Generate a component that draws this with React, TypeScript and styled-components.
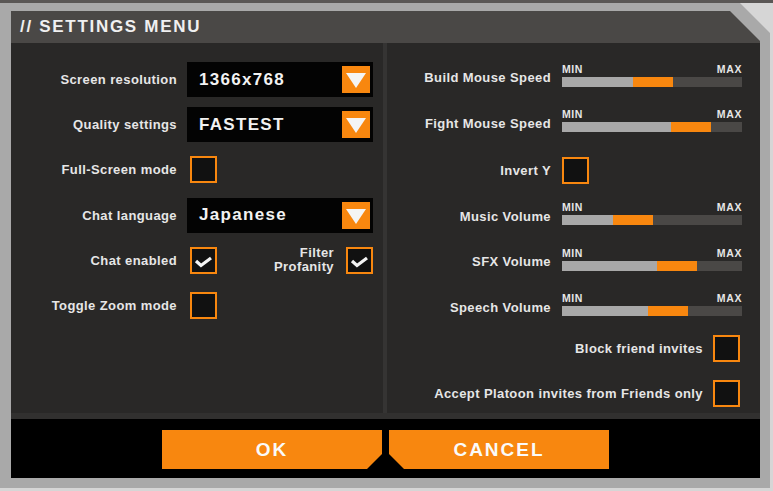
import React from 'react'
import styled, { createGlobalStyle } from 'styled-components'

const GlobalStyle = createGlobalStyle`
  html, body {
    margin: 0;
    padding: 0;
    background: #d4d4d4;
  }
  * {
    box-sizing: border-box;
  }
`;

const ORANGE = '#f8870f';

const Page = styled.div`
  width: 773px;
  height: 491px;
  padding-top: 3px;
  background: linear-gradient(#5a5755 0 3px, #d6d6d6 3px);
  font-family: "Liberation Sans", Arial, sans-serif;
  overflow: hidden;
`;

// 바깥 회색 테두리

const Frame = styled.div`
  width: 770px;
  height: 485px;
  padding: 8px 10px 10px 11px;
  background: #a9a9a9;
  clip-path: polygon(0 0, calc(100% - 30px) 0, 100% 30px, 100% 100%, 0 100%);
`;

const Panel = styled.div`
  width: 100%;
  height: 100%;
  display: flex;
  flex-direction: column;
  clip-path: polygon(0 0, calc(100% - 30px) 0, 100% 30px, 100% 100%, 0 100%);
`;

const TitleBar = styled.div`
  height: 32px;
  flex-shrink: 0;
  display: flex;
  align-items: center;
  padding-left: 9px;
  background: #4a4846;
`;

const Title = styled.h1`
  margin: 0;
  color: #f0f0f0;
  font-size: 17px;
  font-weight: 700;
  letter-spacing: 1.7px;
  line-height: 20px;
`;

// 메인 컨텐츠

const Content = styled.div`
  height: 370px;
  flex-shrink: 0;
  display: grid;
  grid-template-columns: 372px 4px 1fr;
  background: #292827;
`;

const Divider = styled.div`
  background: #353433;
`;

const ContentEdge = styled.div`
  height: 6px;
  flex-shrink: 0;
  background: #31302f;
`;

const Column = styled.div<{ $top: number; $pitch: number }>`
  display: grid;
  grid-auto-rows: ${p => p.$pitch}px;
  align-content: start;
  padding-top: ${p => p.$top}px;
`;

const Row = styled.div<{ $label: number; $control: number; $gap: number; $pt?: number }>`
  display: grid;
  grid-template-columns: ${p => p.$label}px ${p => p.$control}px;
  column-gap: ${p => p.$gap}px;
  align-items: center;
  padding-top: ${p => p.$pt ?? 0}px;
`;

const WideRow = styled.div`
  display: flex;
  justify-content: flex-end;
  align-items: center;
  gap: 10px;
  padding-right: 20px;
`;

const Label = styled.div<{ $nudge?: number }>`
  color: #e6e6e6;
  font-size: 13px;
  font-weight: 700;
  letter-spacing: 0.4px;
  line-height: 15px;
  text-align: right;
  padding-top: ${p => p.$nudge ?? 0}px;
`;

const Dropdown = styled.div`
  height: 35px;
  display: flex;
  align-items: center;
  justify-content: space-between;
  padding: 0 3px 0 12px;
  background: #030303;
`;

const DropdownValue = styled.span`
  color: #f2f2f2;
  font-size: 17px;
  font-weight: 700;
  letter-spacing: 1.3px;
`;

const ArrowBox = styled.div`
  width: 28px;
  height: 27px;
  display: flex;
  align-items: center;
  justify-content: center;
  background: ${ORANGE};
`;

const CheckBox = styled.div<{ $ml?: number }>`
  width: 27px;
  height: 27px;
  margin-left: ${p => p.$ml ?? 0}px;
  display: flex;
  align-items: center;
  justify-content: center;
  border: 2px solid ${ORANGE};
  background: #111111;
`;

const CheckCell = styled.div`
  display: flex;
  align-items: center;
`;

const PairLabel = styled(Label)`
  flex: 1;
  margin-right: 12px;
  line-height: 14px;
`;

// 슬라이더

const Slider = styled.div`
  width: 180px;
  display: flex;
  flex-direction: column;
`;

const SliderScale = styled.div`
  display: flex;
  justify-content: space-between;
  margin-bottom: 1px;
  color: #e6e6e6;
  font-size: 10.5px;
  font-weight: 700;
  letter-spacing: 0.6px;
  line-height: 13px;
`;

const Track = styled.div`
  height: 10px;
  display: flex;
  background: #4a4846;
`;

const TrackFill = styled.div`
  background: #a8a8a8;
`;

const TrackThumb = styled.div`
  width: 40px;
  background: ${ORANGE};
`;

// 하단 버튼

const Footer = styled.div`
  flex: 1;
  display: flex;
  justify-content: center;
  align-items: flex-start;
  gap: 7px;
  padding-top: 11px;
  background: #000;
`;

const ActionButton = styled.button<{ $cut: 'left' | 'right' }>`
  width: 220px;
  height: 39px;
  border: none;
  padding: 0;
  background: ${ORANGE};
  color: #fafafa;
  font-family: "Liberation Sans", Arial, sans-serif;
  font-size: 19px;
  font-weight: 700;
  letter-spacing: 2px;
  clip-path: ${p =>
    p.$cut === 'right'
      ? 'polygon(0 0, 100% 0, 100% calc(100% - 15px), calc(100% - 15px) 100%, 0 100%)'
      : 'polygon(0 0, 100% 0, 100% 100%, 15px 100%, 0 calc(100% - 15px))'};
`;

function Arrow() {
  return (
    <ArrowBox>
      <svg width="28" height="27" viewBox="0 0 28 27">
        <polygon points="4,7 24,7 14,22" fill="#f4f4f4" />
      </svg>
    </ArrowBox>
  );
}

function Check({ checked, ml }: { checked?: boolean; ml?: number }) {
  return (
    <CheckBox $ml={ml}>
      {checked && (
        <svg width="23" height="23" viewBox="0 0 23 23">
          <polyline points="4,12 9,16.5 19,9" fill="none" stroke="#f4f4f4" strokeWidth="3.2" />
        </svg>
      )}
    </CheckBox>
  );
}

function SpeedSlider({ fill }: { fill: number }) {
  return (
    <Slider>
      <SliderScale>
        <span>MIN</span>
        <span>MAX</span>
      </SliderScale>
      <Track>
        <TrackFill style={{ width: `${fill}px` }} />
        <TrackThumb />
      </Track>
    </Slider>
  );
}

const dropdowns: Record<string, string> = {
  resolution: '1366x768',
  quality: 'FASTEST',
  language: 'Japanese',
};

const sliders = [
  { label: 'Build Mouse Speed', fill: 71 },
  { label: 'Fight Mouse Speed', fill: 109 },
];

const volumes = [
  { label: 'Music Volume', fill: 51 },
  { label: 'SFX Volume', fill: 95 },
  { label: 'Speech Volume', fill: 86 },
];

function App() {
  return (
    <Page>
      <GlobalStyle />
      <Frame>
        <Panel>
          <TitleBar>
            <Title>// SETTINGS MENU</Title>
          </TitleBar>
          <Content>
            <Column $top={14} $pitch={45.2}>
              <Row $label={166} $control={186} $gap={10}>
                <Label>Screen resolution</Label>
                <Dropdown>
                  <DropdownValue>{dropdowns.resolution}</DropdownValue>
                  <Arrow />
                </Dropdown>
              </Row>
              <Row $label={166} $control={186} $gap={10}>
                <Label>Quality settings</Label>
                <Dropdown>
                  <DropdownValue>{dropdowns.quality}</DropdownValue>
                  <Arrow />
                </Dropdown>
              </Row>
              <Row $label={166} $control={186} $gap={10}>
                <Label>Full-Screen mode</Label>
                <CheckCell>
                  <Check ml={3} />
                </CheckCell>
              </Row>
              <Row $label={166} $control={186} $gap={10}>
                <Label>Chat language</Label>
                <Dropdown>
                  <DropdownValue>{dropdowns.language}</DropdownValue>
                  <Arrow />
                </Dropdown>
              </Row>
              <Row $label={166} $control={186} $gap={10}>
                <Label>Chat enabled</Label>
                <CheckCell>
                  <Check ml={3} checked />
                  <PairLabel>Filter<br />Profanity</PairLabel>
                  <Check checked />
                </CheckCell>
              </Row>
              <Row $label={166} $control={186} $gap={10}>
                <Label>Toggle Zoom mode</Label>
                <CheckCell>
                  <Check ml={3} />
                </CheckCell>
              </Row>
            </Column>
            <Divider />
            <Column $top={9} $pitch={45.6}>
              {sliders.map(s => (
                <Row key={s.label} $label={164} $control={180} $gap={11}>
                  <Label $nudge={6}>{s.label}</Label>
                  <SpeedSlider fill={s.fill} />
                </Row>
              ))}
              <Row $label={164} $control={180} $gap={11} $pt={9}>
                <Label>Invert Y</Label>
                <CheckCell>
                  <Check />
                </CheckCell>
              </Row>
              {volumes.map(s => (
                <Row key={s.label} $label={164} $control={180} $gap={11} $pt={3}>
                  <Label $nudge={6}>{s.label}</Label>
                  <SpeedSlider fill={s.fill} />
                </Row>
              ))}
              <WideRow>
                <Label>Block friend invites</Label>
                <Check />
              </WideRow>
              <WideRow>
                <Label>Accept Platoon invites from Friends only</Label>
                <Check />
              </WideRow>
            </Column>
          </Content>
          <ContentEdge />
          <Footer>
            <ActionButton $cut="right">OK</ActionButton>
            <ActionButton $cut="left">CANCEL</ActionButton>
          </Footer>
        </Panel>
      </Frame>
    </Page>
  )
}

export default App
